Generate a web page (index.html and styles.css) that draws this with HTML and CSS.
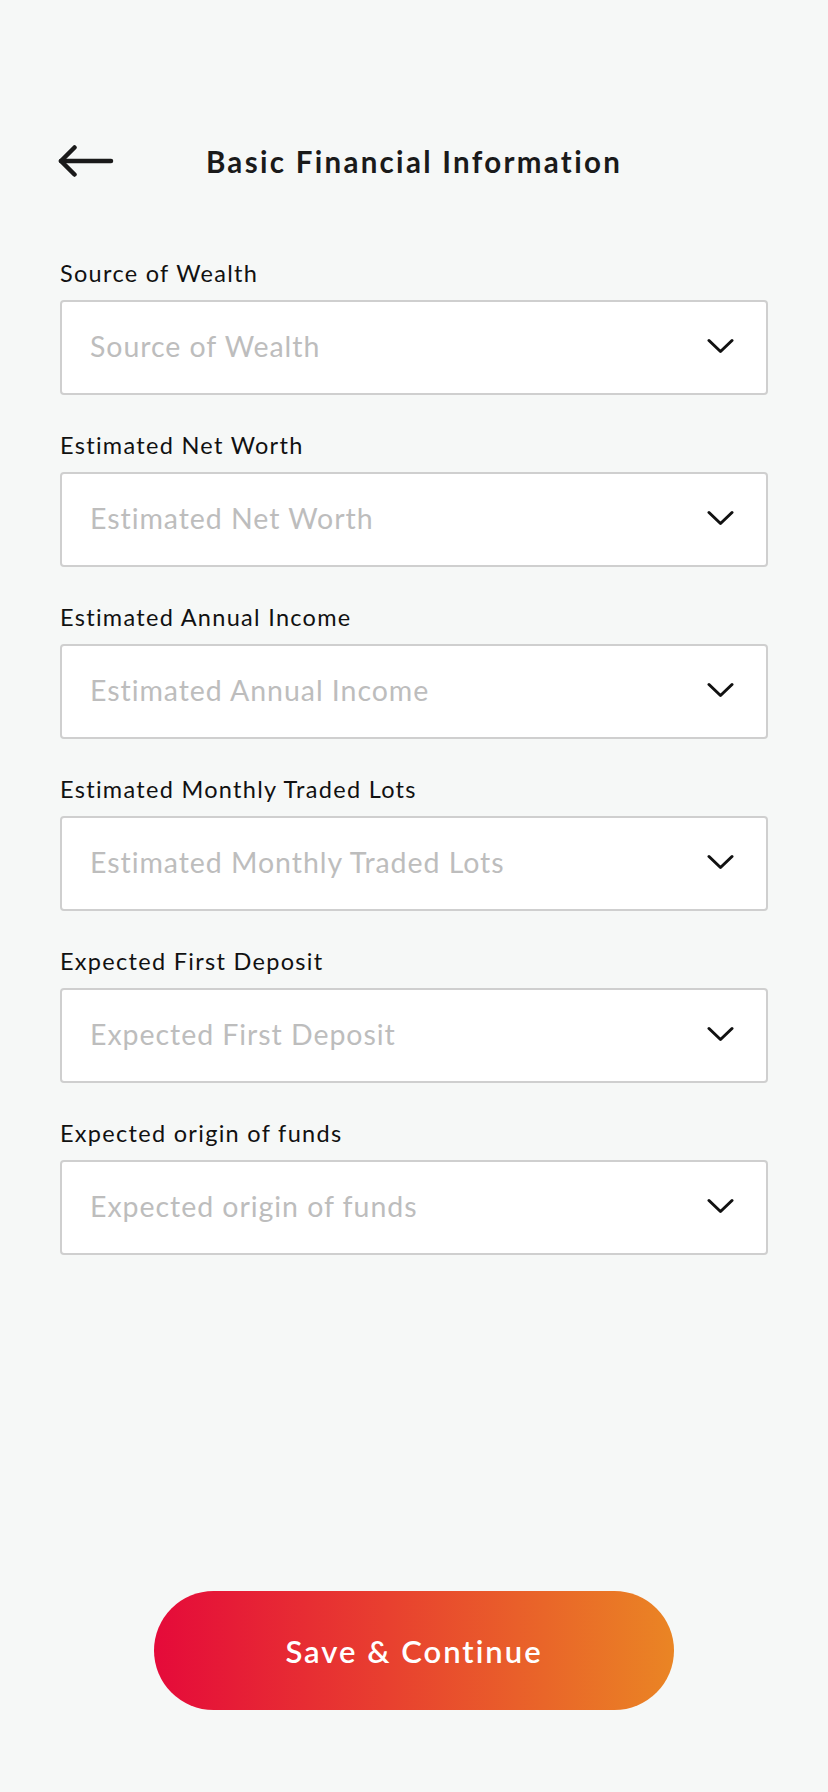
FILE: index.html
```html
<!DOCTYPE html>
<html lang="en">
<head>
<meta charset="utf-8">
<title>Basic Financial Information</title>
<link rel="stylesheet" href="styles.css">
</head>
<body>
<div class="screen">
  <header class="header">
    <button class="back" aria-label="Back">
      <svg width="56" height="32" viewBox="0 0 56 32" fill="none" stroke="#1a1a1a" stroke-width="4.5" stroke-linecap="round" stroke-linejoin="round">
        <path d="M3 16 H53"/>
        <path d="M16.5 2.5 L3 16 L16.5 29.5"/>
      </svg>
    </button>
    <h1 class="title">Basic Financial Information</h1>
    <span class="spacer"></span>
  </header>

  <form class="form">
    <div class="field">
      <label class="label">Source of Wealth</label>
      <div class="select"><span class="placeholder">Source of Wealth</span>
        <svg class="chev" width="27" height="16" viewBox="0 0 27 16" fill="none" stroke="#111" stroke-width="3" stroke-linecap="round" stroke-linejoin="round"><path d="M2 2.5 L13.5 13.5 L25 2.5"/></svg>
      </div>
    </div>
    <div class="field">
      <label class="label">Estimated Net Worth</label>
      <div class="select"><span class="placeholder">Estimated Net Worth</span>
        <svg class="chev" width="27" height="16" viewBox="0 0 27 16" fill="none" stroke="#111" stroke-width="3" stroke-linecap="round" stroke-linejoin="round"><path d="M2 2.5 L13.5 13.5 L25 2.5"/></svg>
      </div>
    </div>
    <div class="field">
      <label class="label">Estimated Annual Income</label>
      <div class="select"><span class="placeholder">Estimated Annual Income</span>
        <svg class="chev" width="27" height="16" viewBox="0 0 27 16" fill="none" stroke="#111" stroke-width="3" stroke-linecap="round" stroke-linejoin="round"><path d="M2 2.5 L13.5 13.5 L25 2.5"/></svg>
      </div>
    </div>
    <div class="field">
      <label class="label">Estimated Monthly Traded Lots</label>
      <div class="select"><span class="placeholder">Estimated Monthly Traded Lots</span>
        <svg class="chev" width="27" height="16" viewBox="0 0 27 16" fill="none" stroke="#111" stroke-width="3" stroke-linecap="round" stroke-linejoin="round"><path d="M2 2.5 L13.5 13.5 L25 2.5"/></svg>
      </div>
    </div>
    <div class="field">
      <label class="label">Expected First Deposit</label>
      <div class="select"><span class="placeholder">Expected First Deposit</span>
        <svg class="chev" width="27" height="16" viewBox="0 0 27 16" fill="none" stroke="#111" stroke-width="3" stroke-linecap="round" stroke-linejoin="round"><path d="M2 2.5 L13.5 13.5 L25 2.5"/></svg>
      </div>
    </div>
    <div class="field">
      <label class="label">Expected origin of funds</label>
      <div class="select"><span class="placeholder">Expected origin of funds</span>
        <svg class="chev" width="27" height="16" viewBox="0 0 27 16" fill="none" stroke="#111" stroke-width="3" stroke-linecap="round" stroke-linejoin="round"><path d="M2 2.5 L13.5 13.5 L25 2.5"/></svg>
      </div>
    </div>
  </form>

  <div class="actions">
    <button class="primary" type="button">Save &amp; Continue</button>
  </div>
</div>
</body>
</html>
```
FILE: styles.css
```css
* { box-sizing: border-box; }
html, body {
  margin: 0;
  padding: 0;
  background: #f6f8f7;
}
body {
  font-family: Lato, "Open Sans", "Liberation Sans", sans-serif;
  color: #111;
}
.screen {
  width: 828px;
  min-height: 1792px;
  display: flex;
  flex-direction: column;
}
.header {
  display: grid;
  grid-template-columns: 1fr auto 1fr;
  align-items: center;
  height: 60px;
  margin-top: 131px;
  padding: 0 58px;
}
.back {
  justify-self: start;
  display: flex;
  align-items: center;
  background: none;
  border: 0;
  padding: 0;
  cursor: pointer;
}
.title {
  margin: 0;
  font-size: 29.5px;
  font-weight: 700;
  color: #1a1a1a;
  letter-spacing: 2.3px;
}
.form {
  display: flex;
  flex-direction: column;
  gap: 36px;
  padding: 0 60px;
  margin-top: 68px;
}
.field {
  display: flex;
  flex-direction: column;
  gap: 13px;
}
.label {
  font-size: 23.5px;
  line-height: 28px;
  color: #111;
  letter-spacing: 1.3px;
}
.select {
  height: 95px;
  background: #fff;
  border: 2px solid #cfcfcf;
  border-radius: 4px;
  display: flex;
  align-items: center;
  justify-content: space-between;
  padding: 0 32px 4px 28px;
}
.placeholder {
  font-size: 28.5px;
  color: #bdbdbd;
  letter-spacing: 0.95px;
}
.actions {
  display: flex;
  justify-content: center;
  margin-top: auto;
  padding-bottom: 82px;
}
.primary {
  width: 520px;
  height: 119px;
  border: 0;
  border-radius: 60px;
  background: linear-gradient(90deg, #e50a3a 0%, #e8402f 45%, #ea8524 100%);
  color: #fff;
  font-family: Lato, "Open Sans", sans-serif;
  font-size: 31px;
  font-weight: 600;
  letter-spacing: 2px;
  cursor: pointer;
}
```
